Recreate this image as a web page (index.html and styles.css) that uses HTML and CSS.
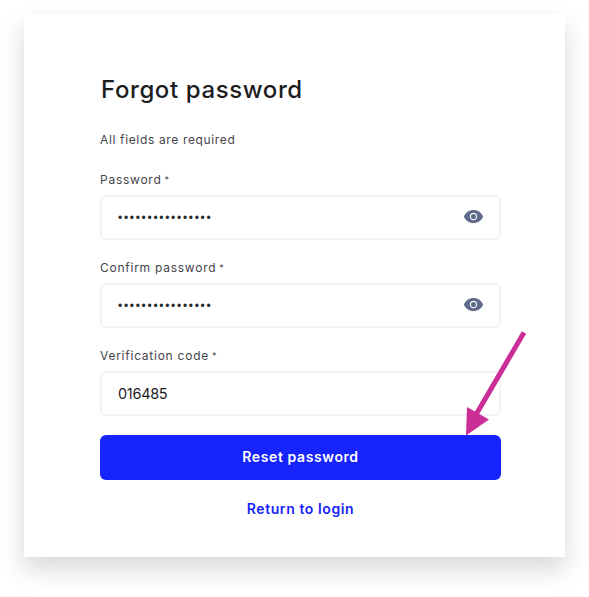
FILE: index.html
```html
<!DOCTYPE html>
<html lang="en">
<head>
<meta charset="utf-8">
<title>Forgot password</title>
<link rel="stylesheet" href="styles.css">
</head>
<body>
<main class="card">
  <h1 class="title">Forgot password</h1>
  <p class="note">All fields are required</p>
  <form class="form">
    <div class="field">
      <label class="label">Password<span class="req">*</span></label>
      <div class="input"><span class="dots">••••••••••••••••</span>
        <svg class="eye" viewBox="0 0 24 24"><path d="M12 4.5C7 4.5 2.73 7.61 1 12c1.73 4.39 6 7.5 11 7.5s9.27-3.11 11-7.5c-1.73-4.39-6-7.5-11-7.5zM12 16.200c-2.320 0-4.200-1.880-4.200-4.200s1.880-4.200 4.200-4.200 4.200 1.880 4.200 4.200-1.880 4.200-4.200 4.200zm0-7.200c-1.660 0-3 1.340-3 3s1.340 3 3 3 3-1.340 3-3-1.340-3-3-3z"/></svg>
      </div>
    </div>
    <div class="field">
      <label class="label">Confirm password<span class="req">*</span></label>
      <div class="input"><span class="dots">••••••••••••••••</span>
        <svg class="eye" viewBox="0 0 24 24"><path d="M12 4.5C7 4.5 2.73 7.61 1 12c1.73 4.39 6 7.5 11 7.5s9.27-3.11 11-7.5c-1.73-4.39-6-7.5-11-7.5zM12 16.200c-2.320 0-4.200-1.880-4.200-4.200s1.880-4.200 4.200-4.200 4.200 1.880 4.200 4.200-1.880 4.200-4.200 4.200zm0-7.200c-1.660 0-3 1.340-3 3s1.340 3 3 3 3-1.340 3-3-1.340-3-3-3z"/></svg>
      </div>
    </div>
    <div class="field">
      <label class="label">Verification code<span class="req">*</span></label>
      <div class="input"><span class="code">016485</span></div>
    </div>
    <button class="submit" type="button">Reset password</button>
    <a class="back">Return to login</a>
  </form>
</main>
<svg class="arrow" viewBox="0 0 589 597"><path class="arrow-line" d="M524 332.500 L474 418"/><path class="arrow-head" d="M466 435.500 L467 407 L489 419.500 Z"/></svg>
</body>
</html>
```

FILE: styles.css
```css
* { box-sizing: border-box; }
html, body { margin: 0; padding: 0; background: #fff; }
body {
  position: relative;
  width: 589px;
  height: 597px;
  overflow: hidden;
  padding: 14px 24px 0;
  font-family: "Inter", "Liberation Sans", sans-serif;
}
.card {
  width: 541px;
  height: 543px;
  background: #fff;
  box-shadow: 0 12px 24px rgba(0, 0, 0, 0.16);
  padding: 61px 64px 0 76px;
}
.title {
  margin: 0 0 0 1px;
  font-size: 24px;
  line-height: 30px;
  font-weight: 500;
  color: #1d1d1f;
  letter-spacing: 0.6px;
}
.note {
  margin: 26px 0 0;
  font-size: 12px;
  line-height: 18px;
  color: #45454b;
  letter-spacing: 0.65px;
}
.form { display: flex; flex-direction: column; margin-top: 22px; }
.field { display: flex; flex-direction: column; margin-bottom: 19px; }
.label {
  font-size: 12px;
  line-height: 16px;
  color: #45454b;
  letter-spacing: 0.75px;
  margin-bottom: 7px;
  padding-top: 1px;
}
.req { font-size: 9px; line-height: 0; margin-left: 3px; vertical-align: 1px; }
.input {
  display: flex;
  align-items: center;
  justify-content: space-between;
  height: 45px;
  width: 401px;
  border: 2px solid #f2f2f8;
  border-radius: 6px;
  padding: 0 15px 0 16px;
  background: #fff;
}
.dots { font-size: 12px; line-height: 16px; letter-spacing: 1.7px; color: #2a2a2e; font-family: "Liberation Sans", sans-serif; }
.code { font-size: 14.5px; color: #1d1d1f; letter-spacing: -0.3px; }
.eye { width: 21px; height: 21px; margin-bottom: 2px; fill: #5f6b8c; }
.submit {
  height: 45px;
  width: 401px;
  border: 0;
  border-radius: 6px;
  background: #1624fb;
  color: #fff;
  font-family: inherit;
  font-size: 14px;
  font-weight: 600;
  letter-spacing: 0.6px;
  padding: 0 0 2px;
}
.back {
  width: 401px;
  margin-top: 19px;
  text-align: center;
  font-size: 14px;
  line-height: 20px;
  font-weight: 600;
  color: #1624fb;
  letter-spacing: 0.6px;
}
.arrow { position: absolute; left: 0; top: 0; width: 589px; height: 597px; pointer-events: none; }
.arrow-line { stroke: #cb2e97; stroke-width: 5; fill: none; }
.arrow-head { fill: #cb2e97; }
```
